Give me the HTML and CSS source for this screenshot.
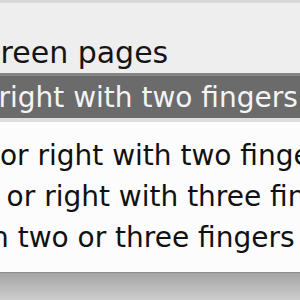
FILE: index.html
```html
<!DOCTYPE html>
<html>
<head>
<meta charset="utf-8">
<link rel="stylesheet" href="styles.css">
</head>
<body>
<div class="screen">
  <div class="top">
    <div class="heading">Screen pages</div>
  </div>
  <div class="bar">
    <div class="bar-text">Scroll left or right with two fingers</div>
  </div>
  <div class="menu">
    <div class="item item-1">Scroll left or right with two fingers</div>
    <div class="item item-2">Swipe left or right with three fingers</div>
    <div class="item item-3">Swipe with two or three fingers</div>
  </div>
  <div class="foot"></div>
</div>
</body>
</html>
```
FILE: styles.css
```css
html, body {
  margin: 0;
  padding: 0;
  width: 300px;
  height: 300px;
  overflow: hidden;
  background: #ececec;
}

.screen {
  width: 300px;
  height: 300px;
  display: flex;
  flex-direction: column;
  overflow: hidden;
  font-family: "DejaVu Sans", "Liberation Sans", sans-serif;
  font-size: 28px;
  white-space: nowrap;
}

.top {
  height: 73px;
  box-sizing: border-box;
  border-top: 3px solid #d9d9d9;
  padding-top: 34px;
  background: #eeeeee;
  flex: none;
}

.heading {
  font-size: 30px;
  line-height: 32px;
  color: #151515;
  margin-left: -35px;
}

.bar {
  box-sizing: border-box;
  border-top: 3px solid #858585;
  background: #6b6b6b;
  flex: none;
  border-bottom: 4px solid #dedede;
  height: 49px;
}

.bar-text {
  line-height: 42px;
  margin-top: 1px;
  color: #f4f4f4;
  margin-left: -179px;
}

.menu {
  background: #fcfcfc;
  padding: 13px 0 14px;
  flex: none;
}

.item {
  line-height: 41px;
  color: #111111;
}

.item-1 { margin-left: -140px; }
.item-2 { margin-left: -140px; }
.item-3 { margin-left: -143px; }

.foot {
  flex: 1;
  border-top: 1px solid #8e8e8e;
  background: linear-gradient(#a4a4a4, #cdcdcd);
}
```
